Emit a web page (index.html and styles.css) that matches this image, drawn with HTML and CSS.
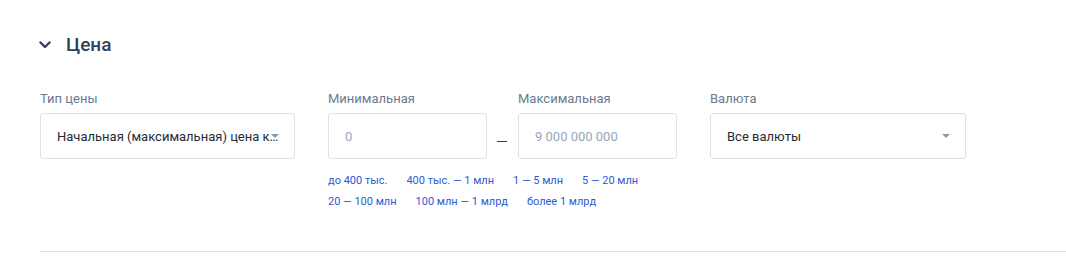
FILE: index.html
```html
<!DOCTYPE html>
<html lang="ru">
  <head>
    <meta charset="UTF-8" />
    <title>Цена</title>
    <link rel="stylesheet" href="styles.css">
  </head>
  <body>
    <section class="filter">
      <div class="filter-head">
        <svg class="chevron" width="12" height="8" viewBox="0 0 12 8">
          <path d="M1.5 1.5 L6 6 L10.5 1.5" fill="none" stroke="#334059" stroke-width="2.4" stroke-linecap="round" stroke-linejoin="round" />
        </svg>
        <h2>Цена</h2>
      </div>

      <div class="filter-row">
        <div class="field field-type">
          <label>Тип цены</label>
          <div class="select">
            <span class="select-text">Начальная (максимальная) цена контракта</span>
            <span class="arrow"></span>
          </div>
        </div>

        <div class="range">
          <div class="range-inputs">
            <div class="field field-num">
              <label>Минимальная</label>
              <input type="text" placeholder="0" />
            </div>
            <span class="dash"></span>
            <div class="field field-num">
              <label>Максимальная</label>
              <input type="text" placeholder="9 000 000 000" />
            </div>
          </div>
          <div class="presets">
            <a href="#">до 400 тыс.</a>
            <a href="#">400 тыс. — 1 млн</a>
            <a href="#">1 — 5 млн</a>
            <a href="#">5 — 20 млн</a>
            <a href="#">20 — 100 млн</a>
            <a href="#">100 млн — 1 млрд</a>
            <a href="#">более 1 млрд</a>
          </div>
        </div>

        <div class="field field-currency">
          <label>Валюта</label>
          <div class="select">
            <span class="select-text">Все валюты</span>
            <span class="arrow"></span>
          </div>
        </div>
      </div>
    </section>
  </body>
</html>
```

FILE: styles.css
```css
* {
  margin: 0;
  padding: 0;
  box-sizing: border-box;
}

body {
  font-family: Roboto, "Liberation Sans", sans-serif;
  background: #fff;
  color: #262b33;
}

.filter {
  margin-left: 39px;
  padding-top: 32px;
  border-bottom: 1px solid #dde3ea;
  height: 252px;
}

.filter-head {
  display: flex;
  align-items: center;
  height: 24px;
}

.chevron {
  margin-right: 15px;
  margin-top: 1px;
}

.filter-head h2 {
  font-size: 19px;
  font-weight: 500;
  color: #334059;
}

.filter-row {
  display: flex;
  align-items: flex-start;
  margin-top: 35px;
  padding-left: 1px;
}

.field label {
  display: block;
  font-size: 13px;
  line-height: 16px;
  color: #6b7a90;
  margin-bottom: 6px;
}

.select {
  height: 46px;
  border: 1px solid #dde3ea;
  border-radius: 3px;
  display: flex;
  align-items: center;
  padding: 0 16px;
  position: relative;
}

.select-text {
  font-size: 13px;
  color: #262b33;
  white-space: nowrap;
  overflow: hidden;
  text-overflow: ellipsis;
}

.arrow {
  position: absolute;
  right: 15px;
  top: 20px;
  width: 0;
  height: 0;
  border-left: 4px solid transparent;
  border-right: 4px solid transparent;
  border-top: 4px solid #8a98ad;
}

.field-type {
  width: 255px;
}

.field-type .select {
  padding-right: 15px;
}

.field-type .arrow {
  right: 15px;
}

.range {
  margin-left: 33px;
  width: 349px;
}

.range-inputs {
  display: flex;
  align-items: flex-end;
}

.field-num {
  width: 159px;
}

.field-num input {
  width: 100%;
  height: 46px;
  border: 1px solid #dde3ea;
  border-radius: 3px;
  padding: 0 16px;
  font-family: inherit;
  font-size: 13px;
  color: #262b33;
  outline: none;
}

.field-num input::placeholder {
  color: #97a6bd;
}

.dash {
  width: 10px;
  height: 1.5px;
  background: #334059;
  margin: 0 11px 17px 10px;
}

.presets {
  display: flex;
  flex-wrap: wrap;
  margin-top: 15px;
  row-gap: 7px;
}

.presets a {
  font-size: 11px;
  line-height: 14px;
  color: #2a5bd7;
  text-decoration: none;
  margin-right: 19px;
}

.field-currency {
  margin-left: 33px;
  width: 256px;
}
```
